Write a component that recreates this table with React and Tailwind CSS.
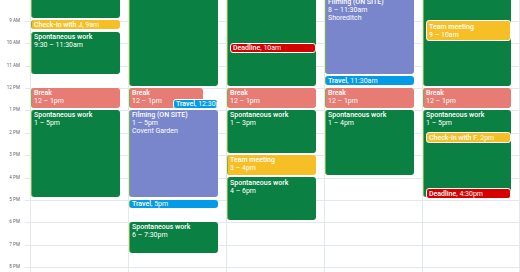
const HOUR = 22.4;
const NOON_Y = 88;
const y = (h) => NOON_Y + (h - 12) * HOUR;

const colors = {
  basil: "bg-[#0b8043]",
  banana: "bg-[#f6bf26]",
  flamingo: "bg-[#e67c73]",
  lavender: "bg-[#7986cb]",
  peacock: "bg-[#039be5]",
  tomato: "bg-[#d50000]",
};

const hours = [
  [9, "9 AM"], [10, "10 AM"], [11, "11 AM"], [12, "12 PM"], [13, "1 PM"], [14, "2 PM"],
  [15, "3 PM"], [16, "4 PM"], [17, "5 PM"], [18, "6 PM"], [19, "7 PM"], [20, "8 PM"],
];

// one list per day; short = single-line chip, over = stacked on top of another event
const days = [
  [
    { start: 7, end: 9, color: "basil", title: "Spontaneous work", time: "7 – 9am" },
    { start: 9, end: 9.25, color: "banana", title: "Check-in with J", time: "9am", short: true },
    { start: 9.5, end: 11.5, color: "basil", title: "Spontaneous work", time: "9:30 – 11:30am" },
    { start: 12, end: 13, color: "flamingo", title: "Break", time: "12 – 1pm" },
    { start: 13, end: 17, color: "basil", title: "Spontaneous work", time: "1 – 5pm" },
  ],
  [
    { start: 7, end: 12, color: "basil", title: "Spontaneous work", time: "7am – 12pm" },
    { start: 12, end: 13, color: "flamingo", title: "Break", time: "12 – 1pm", right: 23 },
    { start: 12.5, end: 12.75, color: "peacock", title: "Travel", time: "12:30pm", short: true, over: true, left: 44 },
    { start: 13, end: 17, color: "lavender", title: "Filming (ON SITE)", time: "1 – 5pm", place: "Covent Garden" },
    { start: 17, end: 17.25, color: "peacock", title: "Travel", time: "5pm", short: true },
    { start: 18, end: 19.5, color: "basil", title: "Spontaneous work", time: "6 – 7:30pm" },
  ],
  [
    { start: 7, end: 12, color: "basil", title: "Spontaneous work", time: "7am – 12pm" },
    { start: 10, end: 10.25, color: "tomato", title: "Deadline", time: "10am", short: true, over: true },
    { start: 12, end: 13, color: "flamingo", title: "Break", time: "12 – 1pm" },
    { start: 13, end: 15, color: "basil", title: "Spontaneous work", time: "1 – 3pm" },
    { start: 15, end: 16, color: "banana", title: "Team meeting", time: "3 – 4pm" },
    { start: 16, end: 18, color: "basil", title: "Spontaneous work", time: "4 – 6pm" },
  ],
  [
    { start: 7.95, end: 11.5, color: "lavender", title: "Filming (ON SITE)", time: "8 – 11:30am", place: "Shoreditch" },
    { start: 11.5, end: 11.75, color: "peacock", title: "Travel", time: "11:30am", short: true },
    { start: 12, end: 13, color: "flamingo", title: "Break", time: "12 – 1pm" },
    { start: 13, end: 16, color: "basil", title: "Spontaneous work", time: "1 – 4pm" },
  ],
  [
    { start: 7, end: 12, color: "basil", title: "Spontaneous work", time: "7am – 12pm" },
    { start: 9, end: 10, color: "banana", title: "Team meeting", time: "9 – 10am", over: true },
    { start: 12, end: 13, color: "flamingo", title: "Break", time: "12 – 1pm" },
    { start: 13, end: 17, color: "basil", title: "Spontaneous work", time: "1 – 5pm" },
    { start: 14, end: 14.25, color: "banana", title: "Check-in with F", time: "2pm", short: true, over: true },
    { start: 16.5, end: 16.75, color: "tomato", title: "Deadline", time: "4:30pm", short: true, over: true },
  ],
];

function Event({ ev }) {
  const top = y(ev.start) - 0.5;
  const height = ev.short ? (ev.over ? 10.5 : 8.5) : (ev.end - ev.start) * HOUR - 2;
  const left = ev.left ?? (ev.over ? 3 : 0);
  const right = ev.right ?? 8;
  const edge = ev.over ? "border border-white" : "border-l border-l-[#7cb342]";

  return (
    <div
      className={`absolute overflow-hidden rounded-[3px] text-white ${colors[ev.color]} ${edge}`}
      style={{ top, height, left, right }}
    >
      {ev.short ? (
        <div className="flex h-full items-center whitespace-nowrap pl-[2px] text-[7px] leading-[8px]">
          <span className="font-medium">{ev.title}</span>, {ev.time}
        </div>
      ) : (
        <div className="pl-[2px] pt-[1.5px] text-[7px] leading-[8px]">
          <div className="truncate font-medium">{ev.title}</div>
          <div className="truncate">{ev.time}</div>
          {ev.place && <div className="truncate">{ev.place}</div>}
        </div>
      )}
    </div>
  );
}

export default function App() {
  return (
    <div className="flex h-[272px] w-[520px] overflow-hidden bg-white font-['Roboto',sans-serif]">
      {/* time gutter */}
      <div className="relative w-[25px] shrink-0">
        {hours.map(([h, label]) => (
          <div
            key={h}
            className="absolute left-0 w-[20px] -translate-y-1/2 text-right text-[4.6px] leading-[6px] text-[#5f6368]"
            style={{ top: y(h) }}
          >
            {label}
          </div>
        ))}
      </div>

      <div className="relative flex-1">
        {hours.map(([h]) => (
          <div key={h} className="absolute left-0 right-0 h-px bg-[#e3e7ee]" style={{ top: y(h) }} />
        ))}
        <div className="relative ml-[5px] grid h-full grid-cols-5">
          {days.map((events, i) => (
            <div key={i} className={`relative border-l border-[#e3e7ee] ${i === 4 ? "border-r" : ""}`}>
              {events.map((ev, j) => (
                <Event key={j} ev={ev} />
              ))}
            </div>
          ))}
        </div>
      </div>
    </div>
  );
}
